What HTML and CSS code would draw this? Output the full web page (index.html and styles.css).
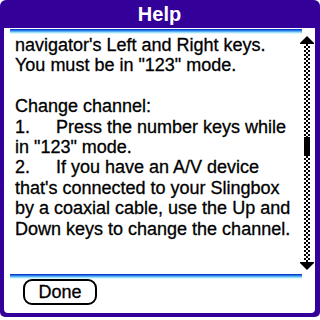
FILE: index.html
```html
<!DOCTYPE html>
<html>
<head>
<meta charset="utf-8">
<link rel="stylesheet" href="styles.css">
</head>
<body>
<div class="dialog">
  <div class="title">Help</div>
  <div class="body">
    <div class="rule"></div>
    <div class="content">
      <div class="text">
        <div class="line">navigator's Left and Right keys.</div>
        <div class="line">You must be in "123" mode.</div>
        <div class="line">&nbsp;</div>
        <div class="line">Change channel:</div>
        <div class="line"><span class="num">1.</span>Press the number keys while</div>
        <div class="line">in "123" mode.</div>
        <div class="line"><span class="num">2.</span>If you have an A/V device</div>
        <div class="line">that's connected to your Slingbox</div>
        <div class="line">by a coaxial cable, use the Up and</div>
        <div class="line">Down keys to change the channel.</div>
      </div>
      <div class="scrollbar">
        <svg class="arrow" width="14" height="8" viewBox="0 0 14 8"><polygon points="7,0 14,7 14,8 0,8 0,7" fill="#000"/></svg>
        <div class="track"><div class="thumb"></div></div>
        <svg class="arrow" width="14" height="8" viewBox="0 0 14 8"><polygon points="0,0 14,0 14,1 7,8 0,1" fill="#000"/></svg>
      </div>
    </div>
    <div class="rule"></div>
    <div class="buttons"><div class="done">Done</div></div>
  </div>
</div>
</body>
</html>
```
FILE: styles.css
```css
html, body {
  margin: 0;
  padding: 0;
  background: #fff;
}
.dialog {
  width: 320px;
  height: 317px;
  box-sizing: border-box;
  background: #330099;
  border-radius: 6px 6px 5px 5px;
  padding: 0 5px 4px 4px;
  display: flex;
  flex-direction: column;
}
.title {
  height: 28px;
  color: #fff;
  font-family: "Liberation Sans", Arial, sans-serif;
  font-weight: bold;
  font-size: 20px;
  line-height: 28px;
  text-align: center;
  flex: none;
}
.body {
  flex: 1;
  background: #fff;
  border-radius: 0 0 4px 4px;
  display: flex;
  flex-direction: column;
}
.rule {
  margin: 1px 0 0 6px;
  width: 292px;
  height: 5px;
  background: linear-gradient(#0a3cc8 0 1px, #2a78e8 1px 2px, #55b0f5 2px 3px, #9ee0fb 3px 4px, #dcf8ff 4px 5px);
  flex: none;
}
.content {
  display: flex;
  height: 239px;
  flex: none;
}
.text {
  flex: 1;
  padding: 1px 0 0 11px;
  font-family: "Liberation Sans", Arial, sans-serif;
  font-size: 18px;
  line-height: 20.4px;
  -webkit-text-stroke: 0.3px #000;
  color: #000;
  white-space: nowrap;
}
.num {
  display: inline-block;
  width: 41px;
}
.scrollbar {
  width: 14px;
  margin-right: 1px;
  padding-top: 2px;
  display: flex;
  flex-direction: column;
  align-items: center;
}
.arrow {
  display: block;
  flex: none;
}
.track {
  width: 6px;
  height: 218px;
  flex: none;
  background-color: #fff;
  background-image: repeating-conic-gradient(#000 0 25%, #fff 0 50%);
  background-size: 4px 4px;
}
.thumb {
  margin-top: 93px;
  height: 19px;
  background: #000;
}
.buttons {
  padding: 0 0 0 19px;
}
.done {
  width: 70px;
  height: 22px;
  border: 2px solid #000;
  border-radius: 9px;
  font-family: "Liberation Sans", Arial, sans-serif;
  font-size: 18px;
  line-height: 22px;
  text-align: center;
  color: #000;
  -webkit-text-stroke: 0.3px #000;
}
```
